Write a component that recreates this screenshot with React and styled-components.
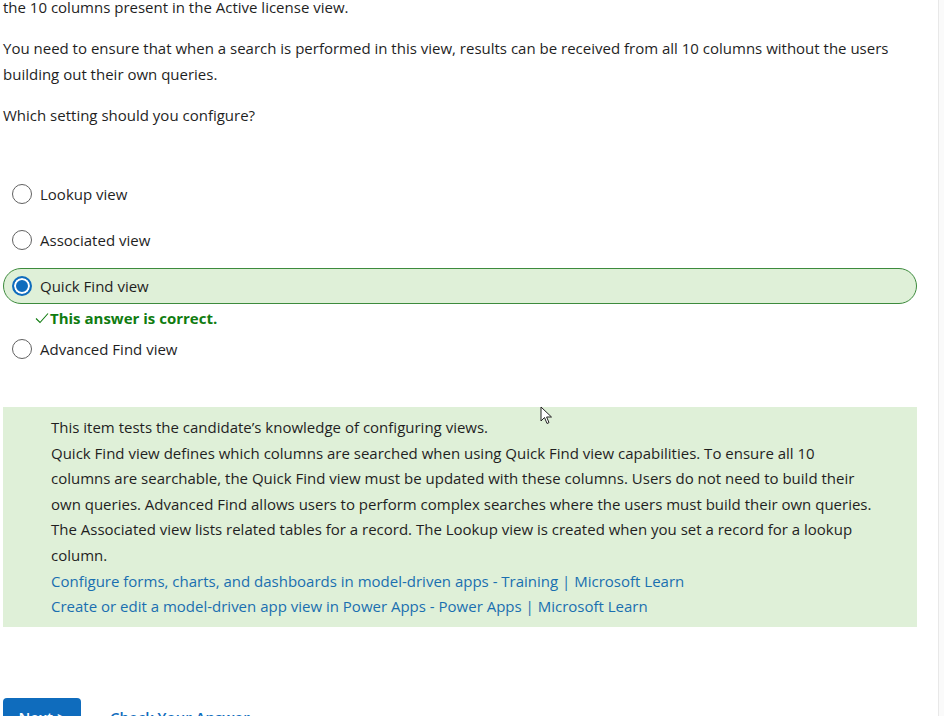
import styled, { createGlobalStyle } from 'styled-components'

const GlobalStyle = createGlobalStyle`
  html, body {
    margin: 0;
    padding: 0;
    background: #fff;
    overflow: hidden;
  }
  body {
    font-family: "Open Sans", "Noto Sans", sans-serif;
    font-size: 15px;
    color: #1f1f1f;
  }
`

const Page = styled.div`
  display: flex;
  width: 944px;
  height: 716px;
  overflow: hidden;
  position: relative;
`

const Main = styled.div`
  width: 935px;
  padding-left: 3px;
  border-right: 1px solid #e8e8e8;
`

const Side = styled.div`
  flex: 1;
  background: #fafafa;
`

const Para = styled.p`
  margin: 0 0 15px;
  line-height: 26px;
  &:first-child {
    margin-top: -6px;
  }
`

const Options = styled.div`
  margin-top: 48px;
  width: 914px;
  display: flex;
  flex-direction: column;
`

const Option = styled.label`
  display: flex;
  align-items: center;
  gap: 8px;
  height: 36px;
  box-sizing: border-box;
  padding-left: 8px;
  margin-bottom: ${({ $selected }) => ($selected ? '4px' : '10px')};
  border: 1px solid ${({ $selected }) => ($selected ? '#3d8b3d' : 'transparent')};
  background: ${({ $selected }) => ($selected ? '#dff0d8' : 'transparent')};
  border-radius: 18px;
`

const Radio = styled.span`
  width: 20px;
  height: 20px;
  box-sizing: border-box;
  border-radius: 50%;
  border: ${({ $checked }) => ($checked ? '2px solid #0f6cbd' : '1px solid #616161')};
  background: ${({ $checked }) => ($checked ? '#0f6cbd' : '#fff')};
  box-shadow: ${({ $checked }) => ($checked ? 'inset 0 0 0 2px #fff' : 'none')};
  flex-shrink: 0;
`

const Feedback = styled.div`
  display: flex;
  align-items: center;
  gap: 1px;
  height: 20px;
  margin: 0 0 3px 32px;
  color: #107c10;
  font-weight: 700;
`

const Explanation = styled.div`
  margin-top: 30px;
  width: 914px;
  box-sizing: border-box;
  background: #dff0d8;
  padding: 8px 44px 7px 48px;
  line-height: 25.6px;
`

const Line = styled.div``

const LearnLink = styled.a`
  display: block;
  color: #1a6fb0;
  text-decoration: none;
`

const Actions = styled.div`
  display: flex;
  align-items: center;
  gap: 29px;
  margin-top: 71px;
`

const NextButton = styled.button`
  width: 78px;
  height: 38px;
  border: none;
  border-radius: 4px;
  background: #0f6cbd;
  color: #fff;
  font: inherit;
  font-weight: 600;
`

const CheckLink = styled.a`
  color: #0f6cbd;
  font-weight: 600;
`

const Cursor = styled.svg`
  position: absolute;
  left: 540px;
  top: 406px;
`

const options = [
  { label: 'Lookup view' },
  { label: 'Associated view' },
  { label: 'Quick Find view', selected: true },
  { label: 'Advanced Find view' },
]

export default function App() {
  return (
    <Page>
      <GlobalStyle />
      <Main>
        <Para>the 10 columns present in the Active license view.</Para>
        <Para>
          You need to ensure that when a search is performed in this view, results can be received from all 10
          columns without the users building out their own queries.
        </Para>
        <Para>Which setting should you configure?</Para>

        <Options>
          {options.map(o => (
            <div key={o.label}>
              <Option $selected={o.selected}>
                <Radio $checked={o.selected} />
                {o.label}
              </Option>
              {o.selected && (
                <Feedback>
                  <svg width="14" height="12" viewBox="0 0 14 12">
                    <path d="M1 6.5 L5 10.5 L13 1.5" fill="none" stroke="#107c10" strokeWidth="1.1" />
                  </svg>
                  This answer is correct.
                </Feedback>
              )}
            </div>
          ))}
        </Options>

        <Explanation>
          <Line>This item tests the candidate’s knowledge of configuring views.</Line>
          <Line>
            Quick Find view defines which columns are searched when using Quick Find view capabilities. To ensure all 10
            columns are searchable, the Quick Find view must be updated with these columns. Users do not need to build their
            own queries. Advanced Find allows users to perform complex searches where the users must build their own queries.
            The Associated view lists related tables for a record. The Lookup view is created when you set a record for a lookup
            column.
          </Line>
          <LearnLink href="#">Configure forms, charts, and dashboards in model-driven apps - Training | Microsoft Learn</LearnLink>
          <LearnLink href="#">Create or edit a model-driven app view in Power Apps - Power Apps | Microsoft Learn</LearnLink>
        </Explanation>

        <Actions>
          <NextButton>Next &gt;</NextButton>
          <CheckLink>Check Your Answer</CheckLink>
        </Actions>
      </Main>
      <Side />
      <Cursor width="14" height="20" viewBox="0 0 14 20">
        <path d="M1 1 L1 15 L4.5 11.5 L7 17.5 L9 16.6 L6.6 11 L11.5 11 Z" fill="#fff" stroke="#222" strokeWidth="1" strokeLinejoin="round" />
      </Cursor>
    </Page>
  )
}
